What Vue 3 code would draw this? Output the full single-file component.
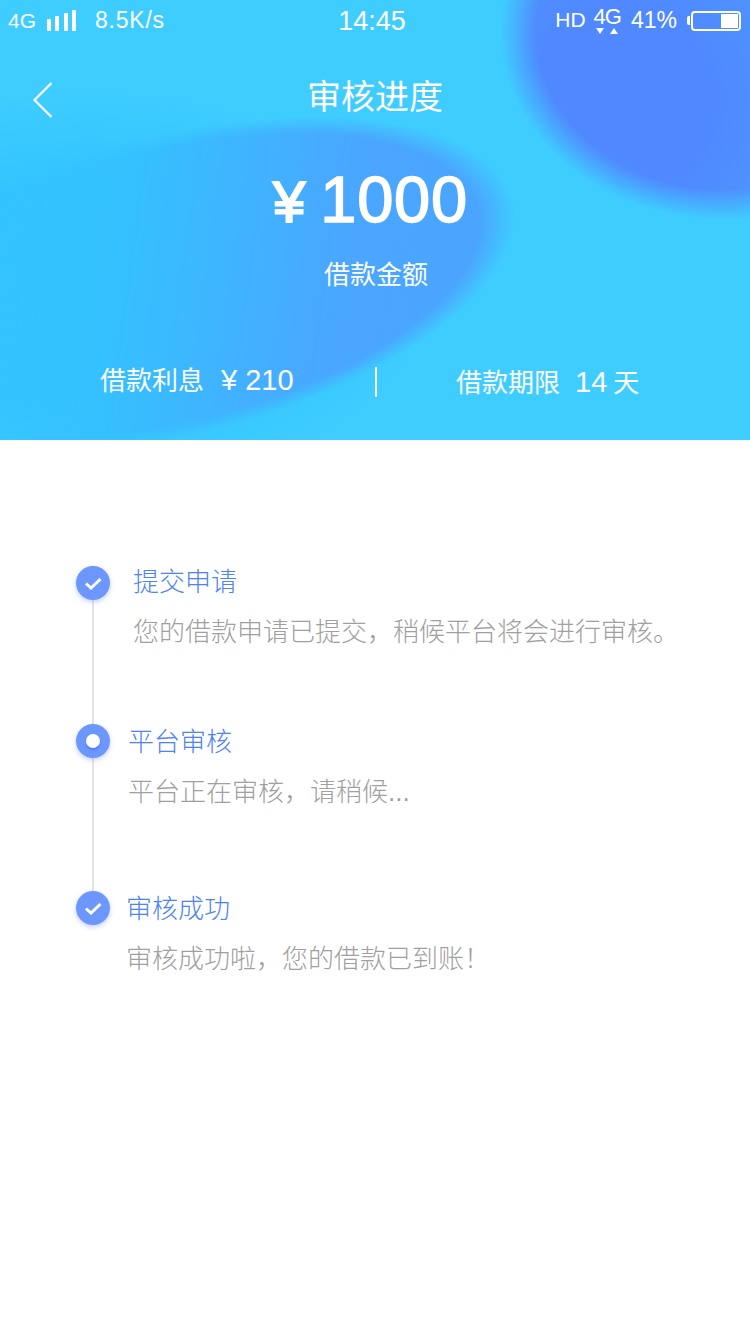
<script setup>
const steps = [
  { title: '提交申请', desc: '您的借款申请已提交，稍候平台将会进行审核。', state: 'done', cls: 'one' },
  { title: '平台审核', desc: '平台正在审核，请稍候...', state: 'now', cls: 'two' },
  { title: '审核成功', desc: '审核成功啦，您的借款已到账！', state: 'done', cls: 'three' }
]
</script>

<template>
  <div class="page">
    <div class="head">
      <div class="blob left"></div>
      <div class="blob right"></div>

      <div class="status">
        <div class="status-l">
          <span class="net">4G</span>
          <span class="bars"><i></i><i></i><i></i><i></i></span>
          <span class="speed">8.5K/s</span>
        </div>
        <div class="time">14:45</div>
        <div class="status-r">
          <span class="hd">HD</span>
          <span class="net2">4G<svg width="24" height="7" viewBox="0 0 24 7"><path d="M1 0h8L5 6zM15 6h8L19 0z" fill="#fff"/></svg></span>
          <span class="pct">41%</span>
          <span class="batt"><b></b></span>
        </div>
      </div>

      <div class="nav">
        <svg class="back" width="22" height="38" viewBox="0 0 22 38"><path d="M19.500 2L2.500 19l17 17" fill="none" stroke="#fff" stroke-width="2.200"/></svg>
        <div class="title">审核进度</div>
      </div>

      <div class="amount"><span class="yen">¥</span>1000</div>
      <div class="label">借款金额</div>

      <div class="info">
        <div class="cell first">借款利息<span>¥ 210</span></div>
        <div class="sep"></div>
        <div class="cell second">借款期限<span>14 <small>天</small></span></div>
      </div>
    </div>

    <div class="timeline">
      <div v-for="s in steps" :key="s.title" class="step" :class="s.cls">
        <div class="dot">
          <svg v-if="s.state === 'done'" width="18" height="14" viewBox="0 0 18 14"><path d="M2 7.500l5 4.500L16.500 3" fill="none" stroke="#fff" stroke-width="3"/></svg>
          <i v-else></i>
        </div>
        <div class="text">
          <div class="step-title">{{ s.title }}</div>
          <div class="step-desc">{{ s.desc }}</div>
        </div>
      </div>
    </div>
  </div>
</template>

<style scoped>
.page {
  width: 750px;
  height: 1334px;
  background: #fff;
  overflow: hidden;
  font-family: "Liberation Sans", "Noto Sans CJK SC", sans-serif;
}
.head {
  position: relative;
  height: 440px;
  background: radial-gradient(ellipse 340px 200px at 90px 290px, #33c4ff 55%, rgba(51, 196, 255, 0) 100%), #3fcdff;
  overflow: hidden;
  color: #fff;
}
.blob {
  position: absolute;
}
.blob.left {
  left: -173px;
  top: 135px;
  width: 696px;
  height: 300px;
  transform: rotate(-14deg);
  background: linear-gradient(112deg, rgba(51, 196, 255, 0) 22%, #35c1ff 42%, #4aa6ff 72%, #4ba4ff 100%);
  -webkit-mask-image: radial-gradient(closest-side, #000 90%, transparent 100%);
  mask-image: radial-gradient(closest-side, #000 90%, transparent 100%);
}
.blob.right {
  left: 500px;
  top: -160px;
  width: 450px;
  height: 380px;
  background: radial-gradient(circle 300px at 120px 260px, #5088ff 30%, #4ca5ff 100%);
  -webkit-mask-image: radial-gradient(closest-side, #000 84%, transparent 100%);
  mask-image: radial-gradient(closest-side, #000 84%, transparent 100%);
}
.status {
  position: relative;
  height: 44px;
  display: flex;
  align-items: center;
  justify-content: space-between;
  padding: 0 9px 3px 8px;
  box-sizing: border-box;
}
.status-l, .status-r {
  display: flex;
  align-items: center;
  width: 200px;
}
.status-r {
  justify-content: flex-end;
}
.net {
  font-size: 21px;
}
.bars {
  display: flex;
  align-items: flex-end;
  gap: 4.300px;
  height: 21px;
  margin: 0 0 0 11px;
}
.bars i {
  display: block;
  width: 4px;
  background: #fff;
}
.bars i:nth-child(1) { height: 12px; }
.bars i:nth-child(2) { height: 15px; }
.bars i:nth-child(3) { height: 18px; }
.bars i:nth-child(4) { height: 21px; }
.speed {
  font-size: 23px;
  margin-left: 19px;
  letter-spacing: .8px;
}
.time {
  font-size: 27px;
  margin: 1px 0 0 -5px;
}
.hd {
  font-size: 21px;
  margin: -2px 8px 0 0;
}
.net2 {
  position: relative;
  font-size: 22px;
  line-height: 22px;
  margin: -8px 10px 0 0;
  letter-spacing: -1px;
}
.net2 svg {
  position: absolute;
  left: 1px;
  top: 22px;
}
.pct {
  font-size: 23px;
  margin-right: 14px;
}
.batt {
  position: relative;
  display: flex;
  justify-content: flex-end;
  width: 50px;
  height: 20px;
  padding: 1px;
  border: 2px solid #fff;
  border-radius: 4px;
  box-sizing: border-box;
}
.batt b {
  display: block;
  width: 17px;
  background: #fff;
}
.batt::before {
  content: "";
  position: absolute;
  left: -6px;
  top: 3px;
  width: 3px;
  height: 9px;
  background: #fff;
  border-radius: 2px 0 0 2px;
}
.nav {
  position: relative;
  height: 90px;
  display: flex;
  justify-content: center;
  align-items: center;
}
.back {
  position: absolute;
  left: 32px;
  top: 37px;
}
.title {
  font-size: 34px;
  line-height: 40px;
  margin-top: 16px;
}
.amount {
  position: relative;
  text-align: center;
  font-size: 65px;
  letter-spacing: .8px;
  line-height: 70px;
  margin-top: 31px;
  padding-right: 9px;
  -webkit-text-stroke: 1.500px #fff;
}
.yen {
  font-size: 58px;
  letter-spacing: 0;
  margin-right: 15px;
  -webkit-text-stroke: 2px #fff;
}
.label {
  position: relative;
  text-align: center;
  font-size: 26px;
  line-height: 34px;
  margin-top: 21px;
  padding-left: 2px;
}
.info {
  position: relative;
  display: flex;
  align-items: center;
  margin-top: 72px;
  font-size: 26px;
}
.cell {
  white-space: nowrap;
}
.cell span {
  font-size: 29px;
  margin-left: 17px;
}
.cell small {
  font-size: 26px;
}
.first {
  margin-left: 100px;
  width: 275px;
  margin-top: -6px;
}
.sep {
  width: 2px;
  height: 30px;
  background: #fff;
}
.second {
  margin-left: 79px;
  margin-top: -2px;
}
.second span {
  margin-left: 15px;
  word-spacing: -2px;
}
.timeline {
  margin-top: 126px;
  padding-left: 76px;
}
.step {
  position: relative;
  display: flex;
  align-items: flex-start;
}
.step.one {
  height: 158px;
}
.step.two {
  height: 167px;
}
.step:not(.three)::before {
  content: "";
  position: absolute;
  left: 16px;
  top: 17px;
  bottom: -17px;
  width: 2px;
  background: #e3e3e6;
}
.dot {
  position: relative;
  width: 34px;
  height: 34px;
  flex: none;
  border-radius: 50%;
  background: #6c97ff;
  box-shadow: 0 2px 5px rgba(80, 120, 255, .35);
  display: flex;
  align-items: center;
  justify-content: center;
}
.dot i {
  display: block;
  width: 14px;
  height: 14px;
  border-radius: 50%;
  background: #fff;
  box-shadow: 0 2px 2px rgba(50, 90, 255, .5);
}
.text {
  margin-top: -1px;
}
.one .text { margin-left: 23px; }
.two .text { margin-left: 18px; margin-top: 1px; }
.three .text { margin-left: 16px; margin-top: 1px; }
.step-title {
  font-size: 26px;
  line-height: 34px;
  color: #4d82fb;
  font-weight: 300;
}
.step-desc {
  margin-top: 16px;
  font-size: 26px;
  line-height: 34px;
  color: #a0a0a0;
  font-weight: 300;
  white-space: nowrap;
}
</style>
